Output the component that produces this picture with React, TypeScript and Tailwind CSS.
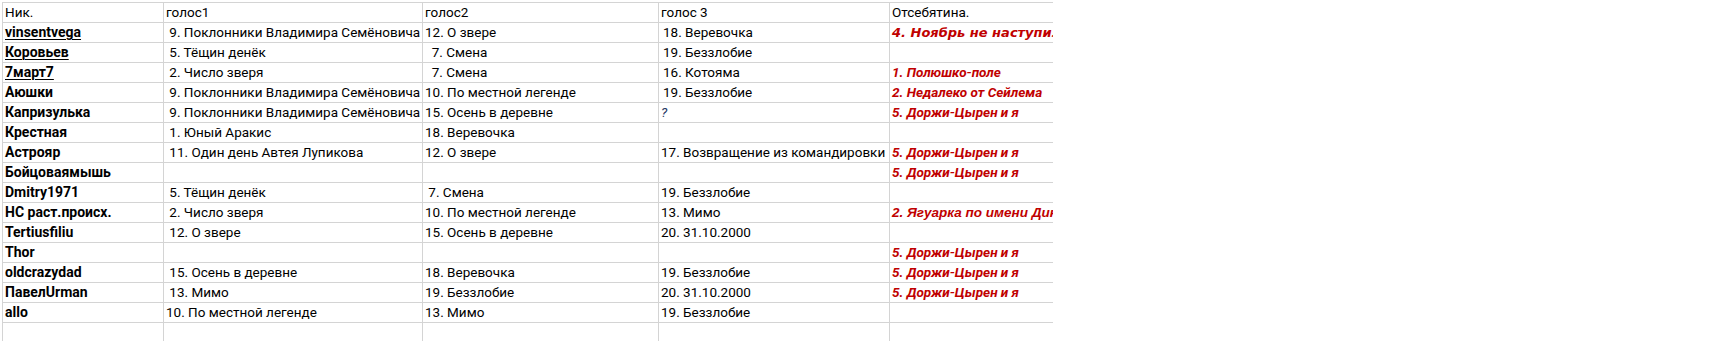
import React from "react";

type Cell = {
  t?: string;
  k?: "red" | "redBig" | "redArial" | "q" | "ind";
};

type Row = {
  nick: string;
  u?: boolean;
  b: string;
  c: string;
  d: Cell;
  e: Cell;
};

const rows: Row[] = [
  { nick: "vinsentvega", u: true, b: " 9. Поклонники Владимира Семёновича", c: "12. О звере", d: { t: "18. Веревочка", k: "ind" }, e: { t: "4. Ноябрь не наступил", k: "redBig" } },
  { nick: "Коровьев", u: true, b: " 5. Тёщин денёк", c: "  7. Смена", d: { t: "19. Беззлобие", k: "ind" }, e: {} },
  { nick: "7март7", u: true, b: " 2. Число зверя", c: "  7. Смена", d: { t: "16. Котояма", k: "ind" }, e: { t: "1. Полюшко-поле", k: "red" } },
  { nick: "Аюшки", b: " 9. Поклонники Владимира Семёновича", c: "10. По местной легенде", d: { t: "19. Беззлобие", k: "ind" }, e: { t: "2. Недалеко от Сейлема", k: "red" } },
  { nick: "Капризулька", b: " 9. Поклонники Владимира Семёновича", c: "15. Осень в деревне", d: { t: "?", k: "q" }, e: { t: "5. Доржи-Цырен и я", k: "red" } },
  { nick: "Крестная", b: " 1. Юный Аракис", c: "18. Веревочка", d: {}, e: {} },
  { nick: "Астрояр", b: " 11. Один день Автея Лупикова", c: "12. О звере", d: { t: "17. Возвращение из командировки" }, e: { t: "5. Доржи-Цырен и я", k: "red" } },
  { nick: "Бойцоваямышь", b: "", c: "", d: {}, e: { t: "5. Доржи-Цырен и я", k: "red" } },
  { nick: "Dmitry1971", b: " 5. Тёщин денёк", c: " 7. Смена", d: { t: "19. Беззлобие" }, e: {} },
  { nick: "НС раст.происх.", b: " 2. Число зверя", c: "10. По местной легенде", d: { t: "13. Мимо" }, e: { t: "2. Ягуарка по имени Дина", k: "redArial" } },
  { nick: "Tertiusfiliu", b: " 12. О звере", c: "15. Осень в деревне", d: { t: "20. 31.10.2000" }, e: {} },
  { nick: "Thor", b: "", c: "", d: {}, e: { t: "5. Доржи-Цырен и я", k: "red" } },
  { nick: "oldcrazydad", b: " 15. Осень в деревне", c: "18. Веревочка", d: { t: "19. Беззлобие" }, e: { t: "5. Доржи-Цырен и я", k: "red" } },
  { nick: "ПавелUrman", b: " 13. Мимо", c: "19. Беззлобие", d: { t: "20. 31.10.2000" }, e: { t: "5. Доржи-Цырен и я", k: "red" } },
  { nick: "allo", b: "10. По местной легенде", c: "13. Мимо", d: { t: "19. Беззлобие" }, e: {} },
];

const cellBox =
  "h-[20px] border-r border-b border-[#d4d4d4] whitespace-pre overflow-hidden leading-[19px]";

const base =
  cellBox + " pl-[2px] text-[13.5px] text-black font-['Roboto',sans-serif]";

const nickCls =
  cellBox + " pl-[2px] text-[14px] text-black font-bold font-['Roboto',sans-serif]";

function styled(c: Cell) {
  switch (c.k) {
    case "red":
      return cellBox + " pl-[2px] text-[13.5px] text-[#c00000] font-bold italic font-['Roboto',sans-serif]";
    case "redBig":
      return cellBox + " pl-[2px] text-[13px] text-[#c00000] font-bold italic font-['DejaVu_Sans',sans-serif]";
    case "redArial":
      return cellBox + " pl-[2px] text-[13.5px] text-[#c00000] font-bold italic font-['Liberation_Sans',sans-serif]";
    case "q":
      return cellBox + " pl-[2px] text-[13.5px] text-[#1f3864] italic font-['Roboto',sans-serif]";
    case "ind":
      return cellBox + " pl-[4px] text-[13.5px] text-black font-['Roboto',sans-serif]";
    default:
      return base;
  }
}

export default function App() {
  return (
    <div className="w-[1726px] h-[341px] bg-white overflow-hidden pt-[2px] pl-[2px]">
      <div className="w-[1051px] overflow-hidden border-l border-t border-[#d4d4d4]">
        <div className="grid grid-cols-[161px_259px_236px_231px_220px] w-[1107px]">
          <div className={base}>Ник.</div>
          <div className={base}>голос1</div>
          <div className={base}>голос2</div>
          <div className={base}>голос 3</div>
          <div className={base}>Отсебятина.</div>
          {rows.map((r, i) => (
            <React.Fragment key={i}>
              <div className={nickCls}>
                {r.u ? (
                  <span className="underline decoration-1 underline-offset-[2px]">{r.nick}</span>
                ) : (
                  r.nick
                )}
              </div>
              <div className={base}>{r.b}</div>
              <div className={base}>{r.c}</div>
              <div className={styled(r.d)}>{r.d.t ?? ""}</div>
              <div className={styled(r.e)}>{r.e.t ?? ""}</div>
            </React.Fragment>
          ))}
          <div className={base}></div>
          <div className={base}></div>
          <div className={base}></div>
          <div className={base}></div>
          <div className={base}></div>
        </div>
      </div>
    </div>
  );
}
